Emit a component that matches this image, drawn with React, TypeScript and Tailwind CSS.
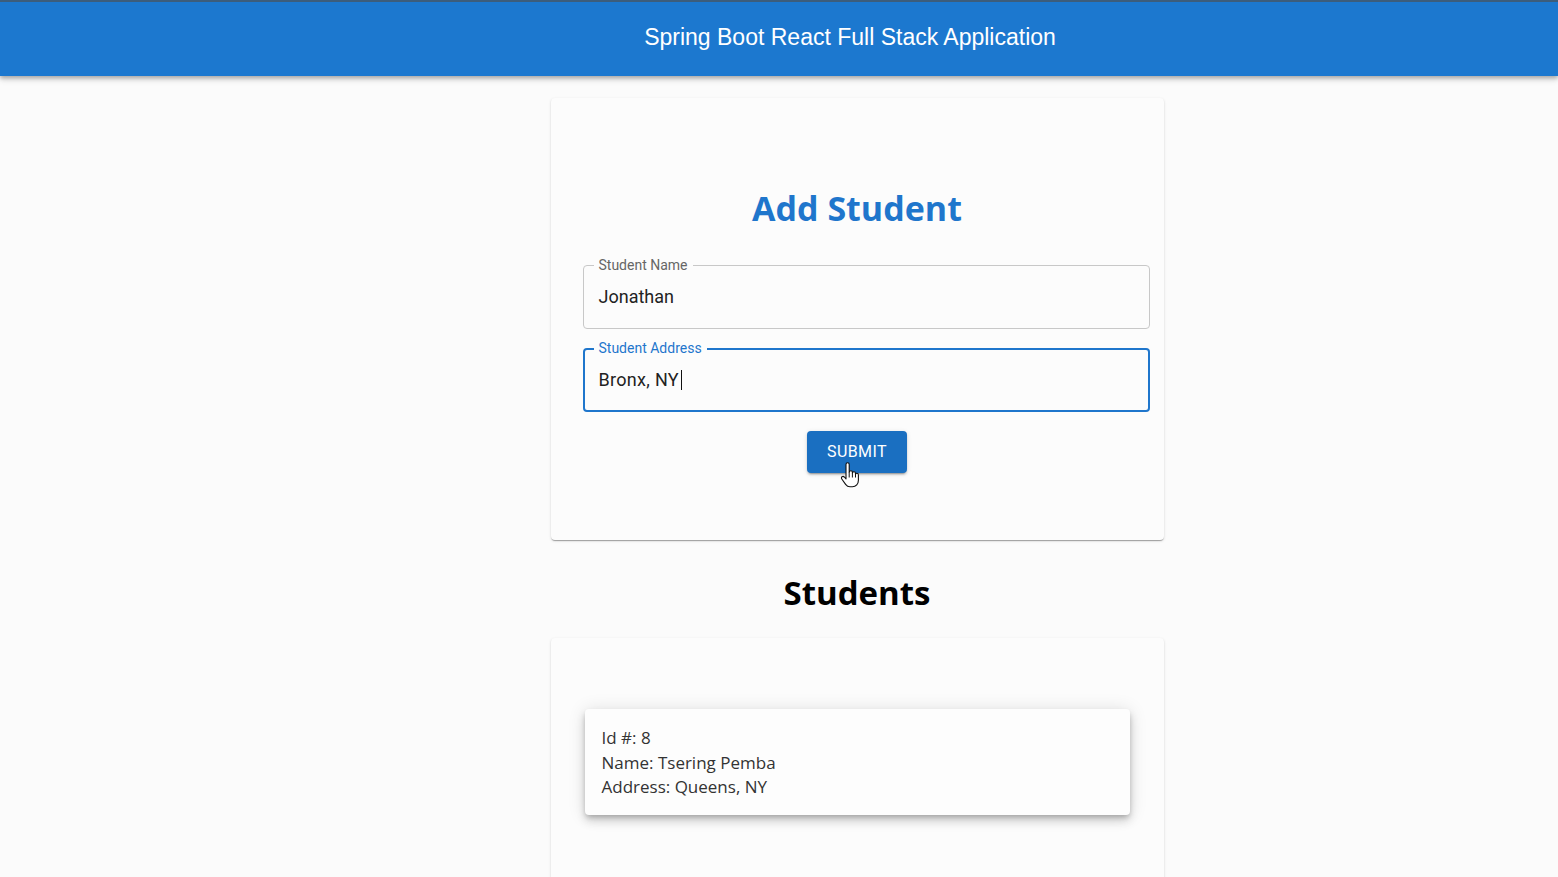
import React from "react";

const seg = { fontFamily: '"Open Sans", "Noto Sans", sans-serif' };
const rob = { fontFamily: 'Roboto, "Liberation Sans", sans-serif' };
const ari = { fontFamily: '"Liberation Sans", Arial, sans-serif' };

function Hand() {
  return (
    <svg width="20" height="26" viewBox="0 0 20 26" className="absolute left-[840px] top-[462px]">
      <path
        d="M6 2.5c0-1 .7-1.7 1.6-1.7S9.2 1.5 9.2 2.5V10c.3-.9 1-1.3 1.7-1.3.9 0 1.5.7 1.5 1.6v.6c.3-.7.9-1.1 1.6-1.1.9 0 1.5.7 1.5 1.6v.8c.3-.6.8-.9 1.4-.9.9 0 1.5.7 1.5 1.6v5.3c0 3.6-2.4 6.6-6 6.6H10c-2 0-3.3-.9-4.4-2.4L1.8 17c-.6-.8-.4-1.8.3-2.3.7-.5 1.6-.3 2.2.3L6 16.9V2.5z"
        fill="#fff"
        stroke="#111"
        strokeWidth="1.1"
        strokeLinejoin="round"
      />
      <path d="M9.2 10v5.5M12.4 11v4.5M15.5 12v3.5" stroke="#111" strokeWidth="1" />
    </svg>
  );
}

export default function App() {
  return (
    <div className="relative h-[877px] bg-[#fbfbfb] overflow-hidden">
      <header
        className="h-[76px] bg-[#1c78cf] border-t-2 border-[#3c5d7c] flex items-center pb-[4px] shadow-[0_2px_4px_rgba(0,0,0,0.25),0_4px_6px_rgba(0,0,0,0.12)]"
        style={ari}
      >
        <h1 className="w-full text-center pl-[142px] text-[23px] text-white">
          Spring Boot React Full Stack Application
        </h1>
      </header>

      <main className="flex flex-col items-center">
        <div className="ml-[156px] mt-[22px] w-[613px] h-[442px] bg-[#fcfcfc] rounded-[4px] shadow-[0_2px_1px_-1px_rgba(0,0,0,0.2),0_1px_1px_0_rgba(0,0,0,0.14),0_1px_3px_0_rgba(0,0,0,0.12)] pl-[32px] pr-[14px] flex flex-col items-center">
          <h2 className="mt-[84px] mr-[18px] text-[34px] font-bold text-[#1f76cc] leading-[52px]" style={seg}>
            Add Student
          </h2>
          <div className="mt-[31px] w-full relative h-[64px] border border-[#c8c8c8] rounded-[4px]" style={rob}>
            <span className="absolute -top-[10px] left-[10px] px-[5px] bg-[#fcfcfc] text-[14px] text-[#666] leading-[18px]">
              Student Name
            </span>
            <div className="pl-[15px] pt-[18px] text-[18px] text-[#222] leading-[26px]">Jonathan</div>
          </div>
          <div className="mt-[19px] w-full relative h-[64px] border-2 border-[#1f76cc] rounded-[4px]" style={rob}>
            <span className="absolute -top-[11px] left-[9px] px-[5px] bg-[#fcfcfc] text-[14px] text-[#1f76cc] leading-[18px]">
              Student Address
            </span>
            <div className="pl-[14px] pt-[17px] text-[18px] text-[#222] leading-[26px] tracking-[0.3px] flex items-center">
              Bronx, NY<span className="inline-block w-[1px] h-[20px] bg-[#111] ml-[2px]" />
            </div>
          </div>
          <button
            className="mt-[19px] ml-[-18px] w-[100px] h-[42px] bg-[#1a6fc1] text-white text-[16px] rounded-[4px] tracking-[0.4px] shadow-[0_3px_1px_-2px_rgba(0,0,0,0.2),0_2px_2px_0_rgba(0,0,0,0.14),0_1px_5px_0_rgba(0,0,0,0.12)]"
            style={rob}
          >
            SUBMIT
          </button>
        </div>

        <h2 className="ml-[156px] mt-[27px] text-[33px] font-bold text-black leading-[52px]" style={seg}>
          Students
        </h2>

        <div className="ml-[156px] mt-[19px] w-[613px] h-[300px] bg-[#fcfcfc] rounded-[4px] shadow-[0_2px_1px_-1px_rgba(0,0,0,0.2),0_1px_1px_0_rgba(0,0,0,0.14),0_1px_3px_0_rgba(0,0,0,0.12)] pt-[71px] pl-[34px] pr-[34px]">
          <div
            className="w-[545px] h-[106px] bg-[#fdfdfd] rounded-[4px] shadow-[0_3px_5px_-1px_rgba(0,0,0,0.2),0_6px_10px_0_rgba(0,0,0,0.14),0_1px_18px_0_rgba(0,0,0,0.12)] pl-[17px] pt-[17px] text-[17px] leading-[24.5px] text-[#333]"
            style={seg}
          >
            <div>Id #: 8</div>
            <div>Name: Tsering Pemba</div>
            <div>Address: Queens, NY</div>
          </div>
        </div>
      </main>
      <Hand />
    </div>
  );
}
